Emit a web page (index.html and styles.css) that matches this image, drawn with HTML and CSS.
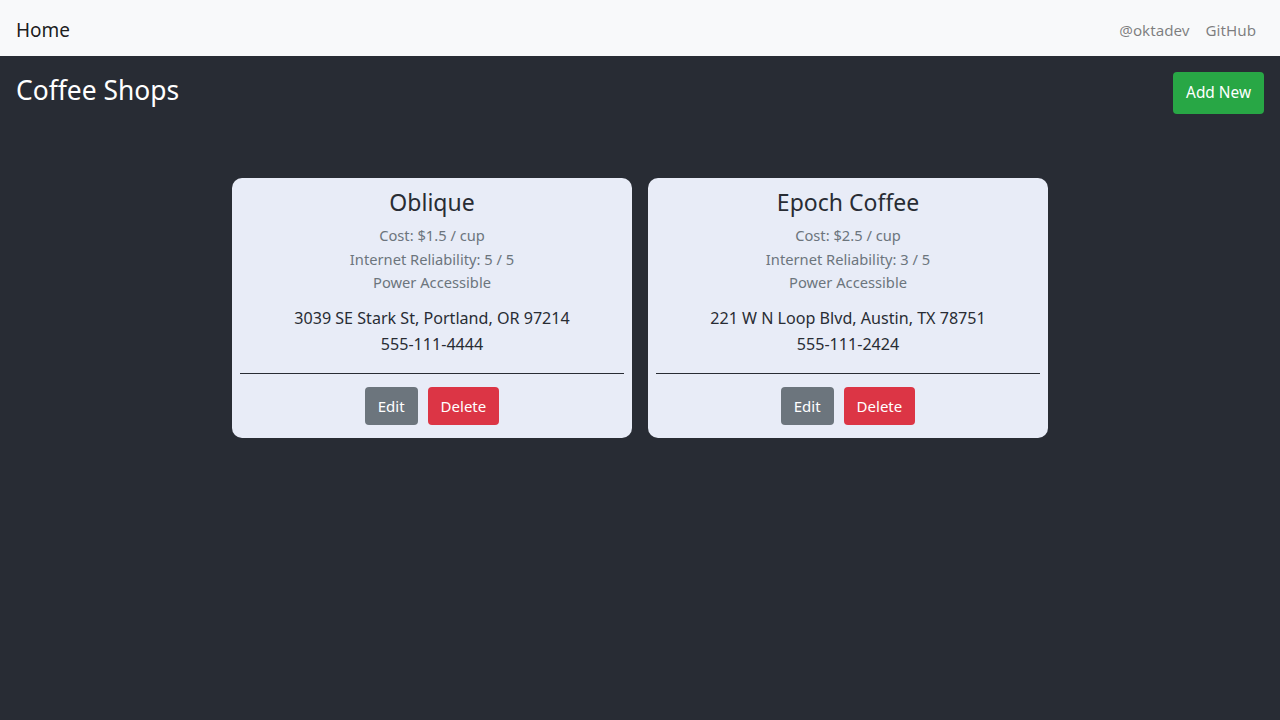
FILE: index.html
```html
<!DOCTYPE html>
<html lang="en">
<head>
<meta charset="utf-8">
<title>Coffee Shops</title>
<link rel="stylesheet" href="styles.css">
</head>
<body>
<nav class="navbar">
  <a class="brand" href="#">Home</a>
  <div class="nav-links">
    <a class="nav-link" href="#">@oktadev</a>
    <a class="nav-link" href="#">GitHub</a>
  </div>
</nav>
<main class="page">
  <div class="page-header">
    <h2 class="title">Coffee Shops</h2>
    <button class="btn btn-success">Add New</button>
  </div>
  <div class="cards">
    <div class="card">
      <h3 class="card-title">Oblique</h3>
      <div class="muted">
        <div>Cost: $1.5 / cup</div>
        <div>Internet Reliability: 5 / 5</div>
        <div>Power Accessible</div>
      </div>
      <div class="contact">
        <div>3039 SE Stark St, Portland, OR 97214</div>
        <div>555-111-4444</div>
      </div>
      <hr class="divider">
      <div class="actions">
        <button class="btn btn-secondary">Edit</button>
        <button class="btn btn-danger">Delete</button>
      </div>
    </div>
    <div class="card">
      <h3 class="card-title">Epoch Coffee</h3>
      <div class="muted">
        <div>Cost: $2.5 / cup</div>
        <div>Internet Reliability: 3 / 5</div>
        <div>Power Accessible</div>
      </div>
      <div class="contact">
        <div>221 W N Loop Blvd, Austin, TX 78751</div>
        <div>555-111-2424</div>
      </div>
      <hr class="divider">
      <div class="actions">
        <button class="btn btn-secondary">Edit</button>
        <button class="btn btn-danger">Delete</button>
      </div>
    </div>
  </div>
</main>
</body>
</html>
```
FILE: styles.css
```css
* { box-sizing: border-box; }
html, body { height: 100%; }
body {
  margin: 0;
  background: #282c34;
  font-family: "Noto Sans", "Open Sans", sans-serif;
  font-size: 16px;
  line-height: 1.5;
  color: #212529;
}
a { text-decoration: none; }
.navbar {
  height: 56px;
  background: #f8f9fa;
  display: flex;
  align-items: center;
  justify-content: space-between;
  padding: 4px 16px 0;
}
.brand {
  font-size: 19px;
  color: rgba(0,0,0,0.9);
}
.nav-links { display: flex; }
.nav-link {
  color: rgba(0,0,0,0.5);
  font-size: 15.2px;
  padding: 0 8px;
}
.page { padding: 16px; }
.page-header {
  display: flex;
  justify-content: space-between;
  align-items: flex-start;
}
.title {
  margin: 0;
  font-weight: 400;
  font-size: 26.4px;
  line-height: 36px;
  color: #fff;
}
.btn {
  font-family: inherit;
  border: 1px solid transparent;
  border-radius: 4px;
  color: #fff;
  font-size: 15px;
  line-height: 24px;
  padding: 6px 12px;
  cursor: pointer;
}
.btn-success {
  background: #28a745;
  font-size: 15.4px;
  padding: 8px 12px;
}
.btn-secondary { background: #6c757d; }
.btn-danger { background: #dc3545; }
.cards {
  display: flex;
  justify-content: center;
  gap: 16px;
  margin-top: 64px;
}
.card {
  width: 400px;
  background: #e8ecf7;
  border-radius: 10px;
  padding: 8px 8px 13px;
  text-align: center;
}
.card-title {
  margin: 0 0 6px;
  font-weight: 400;
  font-size: 23px;
  line-height: 32px;
  color: #282c34;
}
.muted {
  color: #6c757d;
  font-size: 14.7px;
  line-height: 23.5px;
}
.contact {
  margin-top: 10px;
  font-size: 16.1px;
  line-height: 26px;
  color: #282c34;
}
.divider {
  margin: 16px 0 13px;
  border: 0;
  border-top: 1px solid #282c34;
}
.actions {
  display: flex;
  justify-content: center;
  gap: 10px;
}
```
